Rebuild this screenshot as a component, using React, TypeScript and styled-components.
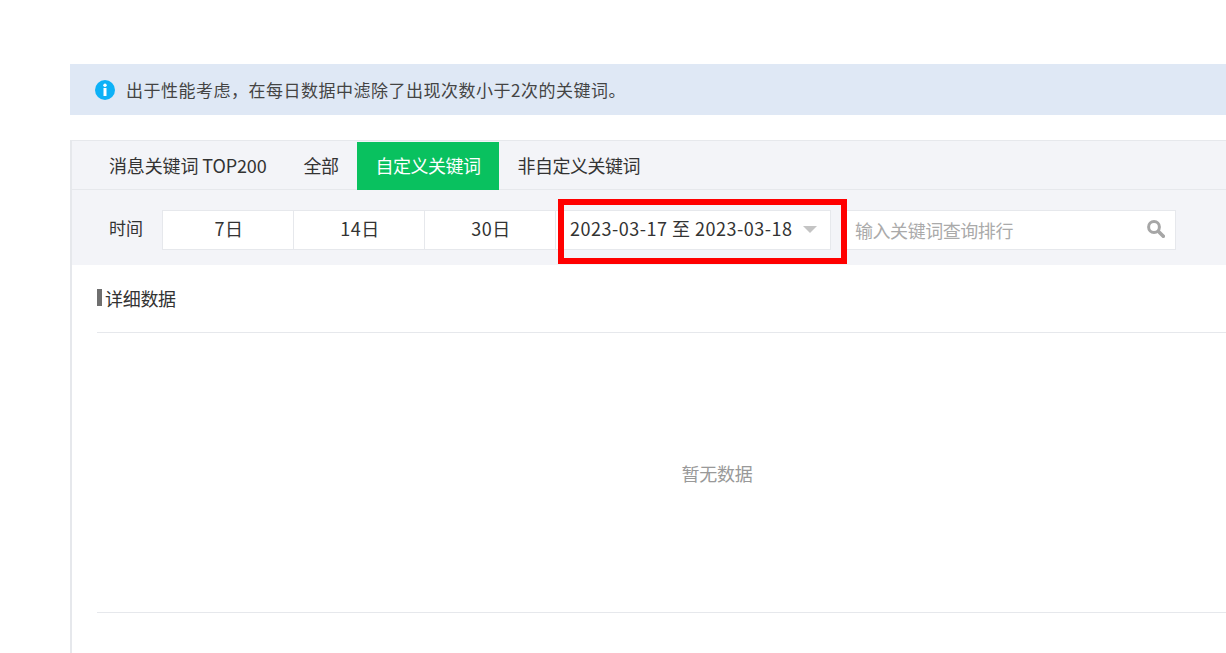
import React from 'react';
import styled, { createGlobalStyle } from 'styled-components';

const GlobalStyle = createGlobalStyle`
	html, body {
		margin: 0;
		padding: 0;
		background: #fff;
	}
	body {
		font-family: "Noto Sans CJK SC", "Noto Sans", sans-serif;
		color: #333;
		overflow: hidden;
	}
`;

const Page = styled.div`
	width: 1226px;
	height: 653px;
	overflow: hidden;
	padding: 64px 0 0 70px;
	box-sizing: border-box;
`;

const Inner = styled.div`
	width: 1292px;
`;

const Alert = styled.div`
	height: 51px;
	background: #dfe8f5;
	display: flex;
	align-items: center;
	padding-left: 25px;
	gap: 11px;
	font-size: 17px;
	letter-spacing: 0.5px;
	color: #444;
	margin-bottom: 25px;
`;

const Panel = styled.div`
	border-top: 1px solid #e6e8ec;
	border-left: 2px solid #e6e8ec;
	height: 520px;
`;

const TabBar = styled.div`
	height: 49px;
	display: flex;
	align-items: stretch;
	background: #f3f4f8;
	border-bottom: 1px solid #e6e8ec;
	box-sizing: border-box;
	padding-left: 18.5px;
`;

const Tab = styled.div<{ $active?: boolean }>`
	padding: 0 18.5px 2px;
	margin-top: 1px;
	margin-bottom: -1px;
	display: flex;
	align-items: center;
	font-size: 18px;
	letter-spacing: -0.5px;
	white-space: nowrap;
	color: ${(p) => (p.$active ? '#fff' : '#333')};
	background: ${(p) => (p.$active ? '#09c15f' : 'transparent')};
	&:first-child {
		letter-spacing: -0.13px;
	}
`;

const FilterRow = styled.div`
	height: 75px;
	box-sizing: border-box;
	padding: 4px 0 0 37px;
	background: #f3f4f8;
	display: flex;
	align-items: center;
	position: relative;
`;

const FilterLabel = styled.span`
	font-size: 17px;
	width: 53px;
	margin-top: -4px;
`;

const Segments = styled.div`
	display: flex;
	height: 40px;
	box-sizing: border-box;
	border: 1px solid #e6e8ec;
	background: #fff;
`;

const Segment = styled.div`
	width: 131px;
	box-sizing: border-box;
	padding: 0 0 3px 2px;
	display: flex;
	align-items: center;
	justify-content: center;
	font-size: 18px;
	letter-spacing: 0.5px;
	border-left: 1px solid #e6e8ec;
	&:first-child {
		width: 130px;
		border-left: 0;
	}
`;

const DateRange = styled.div`
	width: 275px;
	height: 40px;
	box-sizing: border-box;
	background: #fff;
	border: 1px solid #e6e8ec;
	border-left: 0;
	display: flex;
	align-items: center;
	padding: 0 0 3px 14px;
	font-size: 18px;
	letter-spacing: 0.5px;
	white-space: nowrap;
	gap: 11px;
`;

const Caret = styled.span`
	width: 0;
	height: 0;
	border-left: 7px solid transparent;
	border-right: 7px solid transparent;
	border-top: 7px solid #c4c4c4;
	margin-top: 3px;
`;

const SearchBox = styled.div`
	margin-left: 14px;
	width: 331px;
	height: 40px;
	box-sizing: border-box;
	background: #fff;
	border: 1px solid #e6e8ec;
	border-left: 0;
	display: flex;
	align-items: center;
	justify-content: space-between;
	padding: 0 10px;
	font-size: 18px;
	letter-spacing: -0.45px;
	color: #aaa;
`;

const SearchGlyph = styled.svg`
	margin-top: -2px;
`;

const Highlight = styled.div`
	position: absolute;
	left: 486px;
	top: 9px;
	width: 289px;
	height: 65px;
	box-sizing: border-box;
	border: 6px solid #ff0000;
`;

const Detail = styled.div`
	padding: 0 25px;
`;

const DetailHeader = styled.div`
	height: 68px;
	box-sizing: border-box;
	padding-bottom: 2px;
	display: flex;
	align-items: center;
	gap: 3px;
	font-size: 18px;
	letter-spacing: -0.3px;
	border-bottom: 1px solid #e6e8ec;
`;

const HeaderMark = styled.span`
	width: 5px;
	height: 17px;
	background: #6f6f6f;
`;

const Empty = styled.div`
	height: 280px;
	box-sizing: border-box;
	padding-top: 1px;
	display: flex;
	align-items: center;
	justify-content: center;
	font-size: 18px;
	letter-spacing: -0.3px;
	color: #999;
	border-bottom: 1px solid #e6e8ec;
`;

function InfoIcon() {
	return (
		<svg width="20" height="20" viewBox="0 0 20 20">
			<circle cx="10" cy="10" r="10" fill="#0db1f7" />
			<circle cx="10" cy="5.2" r="1.7" fill="#fff" />
			<rect x="8.5" y="8" width="3" height="8" fill="#fff" />
		</svg>
	);
}

function SearchIcon() {
	return (
		<SearchGlyph width="18" height="18" viewBox="0 0 18 18">
			<circle cx="7" cy="7" r="5.4" fill="none" stroke="#a6a6a6" strokeWidth="3" />
			<path d="M11.5 11.5l4.8 4.8" stroke="#a6a6a6" strokeWidth="3.6" strokeLinecap="round" />
		</SearchGlyph>
	);
}

export default function App() {
	return (
		<Page>
			<GlobalStyle />
			<Inner>
				<Alert>
					<InfoIcon />
					<span>出于性能考虑，在每日数据中滤除了出现次数小于2次的关键词。</span>
				</Alert>
				<Panel>
					<TabBar>
						<Tab>消息关键词 TOP200</Tab>
						<Tab>全部</Tab>
						<Tab $active>自定义关键词</Tab>
						<Tab>非自定义关键词</Tab>
					</TabBar>
					<FilterRow>
						<FilterLabel>时间</FilterLabel>
						<Segments>
							<Segment>7日</Segment>
							<Segment>14日</Segment>
							<Segment>30日</Segment>
						</Segments>
						<DateRange>
							<span>2023-03-17 至 2023-03-18</span>
							<Caret />
						</DateRange>
						<SearchBox>
							<span>输入关键词查询排行</span>
							<SearchIcon />
						</SearchBox>
						<Highlight />
					</FilterRow>
					<Detail>
						<DetailHeader>
							<HeaderMark />
							<span>详细数据</span>
						</DetailHeader>
						<Empty>暂无数据</Empty>
					</Detail>
				</Panel>
			</Inner>
		</Page>
	);
}
